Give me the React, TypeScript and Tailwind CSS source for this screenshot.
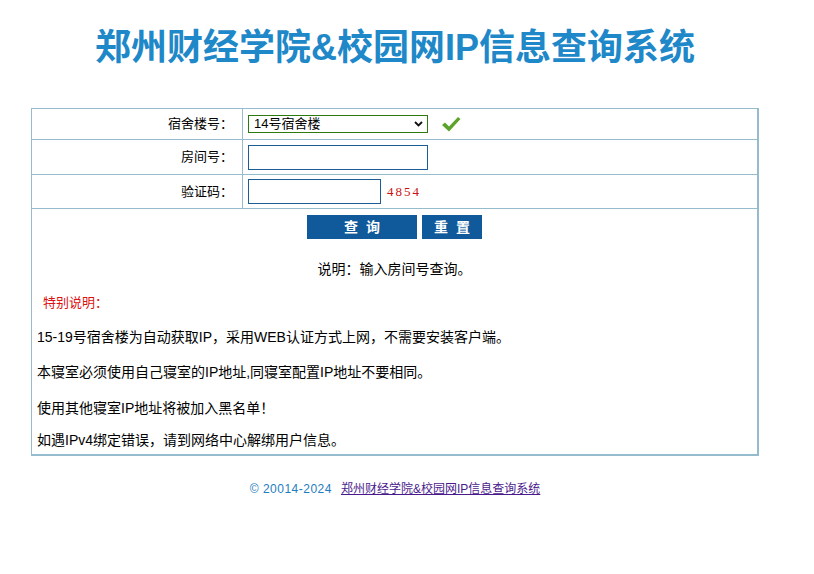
import React from "react"

const font = { fontFamily: '"Liberation Sans", "Noto Sans CJK SC", sans-serif' }

function CheckMark() {
  return (
    <svg width="20" height="17" viewBox="0 0 20 17">
      <path d="M1 9 L4 6.5 L8 10.5 L17 1 L19.5 3 L8 15.5 Z" fill="#5ba32b" />
    </svg>
  )
}

export default function App() {
  const notes = [
    "15-19号宿舍楼为自动获取IP，采用WEB认证方式上网，不需要安装客户端。",
    "本寝室必须使用自己寝室的IP地址,同寝室配置IP地址不要相同。",
    "使用其他寝室IP地址将被加入黑名单！",
    "如遇IPv4绑定错误，请到网络中心解绑用户信息。",
  ]

  return (
    <div className="min-h-screen bg-white text-black" style={font}>
      <div className="w-[790px]">
        <h1 className="pt-[26px] text-center text-[36px] leading-[44px] font-bold text-[#1e88c8]">
          郑州财经学院&amp;校园网IP信息查询系统
        </h1>

        <div className="mx-[31px] mt-[38px] border-l border-t border-r-2 border-b-2 border-[#94bccd] text-[13px]">
          <div className="flex h-[31px] border-b border-[#94bccd]">
            <div className="w-[211px] border-r border-[#94bccd] flex items-center justify-end pr-[9px]">宿舍楼号：</div>
            <div className="flex items-center pl-[5px] gap-[13px]">
              <div className="relative w-[180px] h-[18px] border border-[#2e7a10] flex items-center pl-[5px] text-[13px]">
                14号宿舍楼
                <svg className="absolute right-[4px] top-[5px]" width="9" height="6" viewBox="0 0 9 6">
                  <path d="M1 1 L4.5 4.5 L8 1" stroke="#111" strokeWidth="1.8" fill="none" />
                </svg>
              </div>
              <CheckMark />
            </div>
          </div>

          <div className="flex h-[35px] border-b border-[#94bccd]">
            <div className="w-[211px] border-r border-[#94bccd] flex items-center justify-end pr-[9px]">房间号：</div>
            <div className="flex items-center pl-[5px]">
              <input className="w-[180px] h-[25px] border border-[#1d5c94] outline-none" />
            </div>
          </div>

          <div className="flex h-[34px] border-b border-[#94bccd]">
            <div className="w-[211px] border-r border-[#94bccd] flex items-center justify-end pr-[9px]">验证码：</div>
            <div className="flex items-center pl-[5px] gap-[6px]">
              <input className="w-[133px] h-[25px] border border-[#1d5c94] outline-none" />
              <span className="text-[13px] tracking-[2px] text-[#cc1111]" style={{ fontFamily: '"Liberation Serif", serif' }}>
                4854
              </span>
            </div>
          </div>

          <div className="pt-[6px] pb-[4px]">
            <div className="flex justify-center gap-[5px]">
              <button className="w-[110px] h-[24px] bg-[#105a9c] text-white font-bold text-[14px] tracking-[8px] pl-[8px]">查询</button>
              <button className="w-[60px] h-[24px] bg-[#105a9c] text-white font-bold text-[14px] tracking-[8px] pl-[8px]">重置</button>
            </div>
            <p className="mt-[20px] text-center text-[14px] leading-[20px]">说明：输入房间号查询。</p>
            <p className="mt-[14px] pl-[11px] leading-[20px] text-[#e01010]">特别说明：</p>
            <div className="pl-[5px] text-[14px] leading-[20px]">
              <p className="mt-[14px]">{notes[0]}</p>
              <p className="mt-[15px]">{notes[1]}</p>
              <p className="mt-[16px]">{notes[2]}</p>
              <p className="mt-[12px]">{notes[3]}</p>
            </div>
          </div>
        </div>

        <div className="mt-[25px] text-center text-[12px] leading-[16px]">
          <span className="text-[#1e7cc0] tracking-[0.5px]">© 20014-2024</span>
          <a href="#" className="ml-[9px] text-[#4a1a8c] underline">郑州财经学院&amp;校园网IP信息查询系统</a>
        </div>
      </div>
    </div>
  )
}
